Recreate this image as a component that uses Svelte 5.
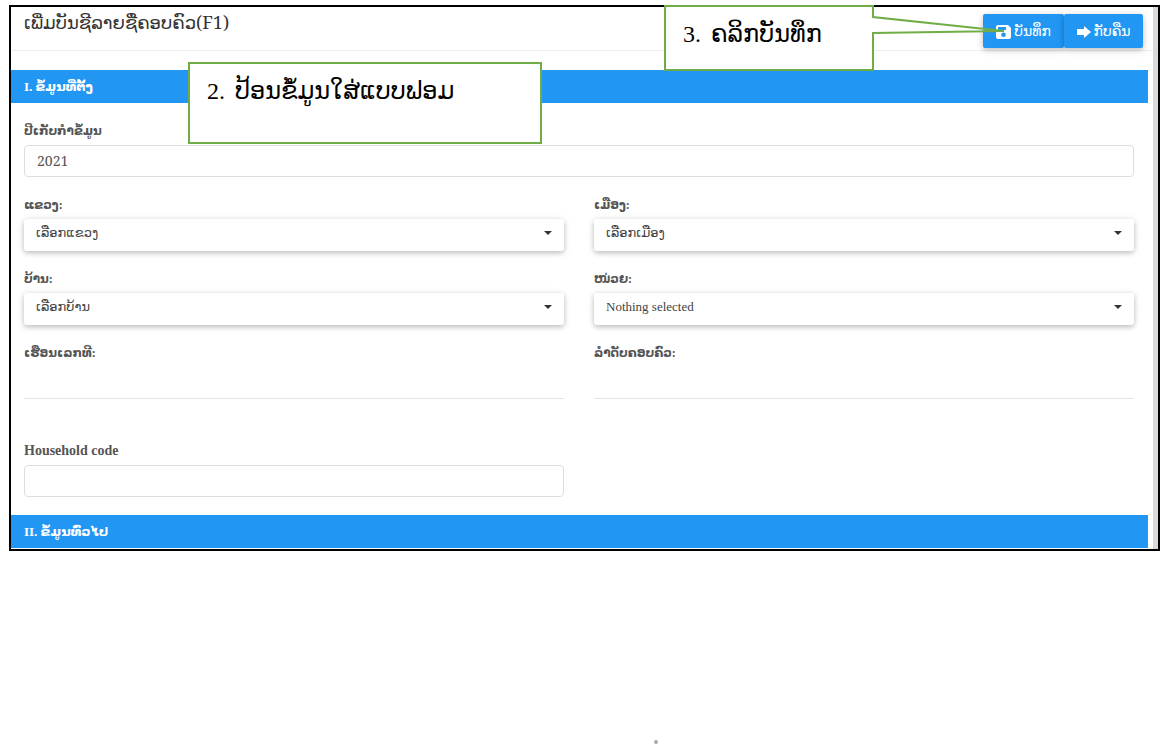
<script>
  let year = '2021';
  let houseNo = '';
  let familyNo = '';
  let householdCode = '';

  const selects = [
    { id: 'province', label: 'ແຂວງ:', placeholder: 'ເລືອກແຂວງ' },
    { id: 'district', label: 'ເມືອງ:', placeholder: 'ເລືອກເມືອງ' },
    { id: 'village', label: 'ບ້ານ:', placeholder: 'ເລືອກບ້ານ' },
    { id: 'unit', label: 'ໜ່ວຍ:', placeholder: 'Nothing selected' }
  ];
</script>

<div class="frame">
  <div class="page">
    <header>
      <h1>ເພີ່ມບັນຊີລາຍຊື່ຄອບຄົວ(F1)</h1>
      <div class="actions">
        <button type="button" class="store">
          <svg width="16" height="16" viewBox="0 0 16 16">
            <path fill="#fff" fill-rule="evenodd" d="M2 1h10l3 3v9a2 2 0 0 1-2 2H2a2 2 0 0 1-2-2V3a2 2 0 0 1 2-2zM2 3v3h8V3zM7.5 8.500a2.300 2.300 0 1 0 0 4.600a2.300 2.300 0 1 0 0-4.600z" />
          </svg>
          <span>ບັນທຶກ</span>
        </button>
        <button type="button" class="back">
          <svg width="14" height="14" viewBox="0 0 14 14">
            <path fill="#fff" d="M0 4h7V1l7 6l-7 6v-3H0z" />
          </svg>
          <span>ກັບຄືນ</span>
        </button>
      </div>
    </header>

    <form>
      <h2>I. ຂໍ້ມູນທີ່ຕັ້ງ</h2>
      <div class="fields">
        <div class="field wide">
          <label for="year">ປີເກັບກຳຂໍ້ມູນ</label>
          <input id="year" class="box" type="text" bind:value={year} />
        </div>
        {#each selects as item}
          <div class="field">
            <label for={item.id}>{item.label}</label>
            <div class="picker">
              <select id={item.id}>
                <option>{item.placeholder}</option>
              </select>
              <svg class="caret" width="8" height="4" viewBox="0 0 8 4">
                <path fill="#333" d="M0 0h8L4 4z" />
              </svg>
            </div>
          </div>
        {/each}
        <div class="field">
          <label for="house">ເຮືອນເລກທີ:</label>
          <input id="house" class="line" type="text" bind:value={houseNo} />
        </div>
        <div class="field">
          <label for="family">ລຳດັບຄອບຄົວ:</label>
          <input id="family" class="line" type="text" bind:value={familyNo} />
        </div>
        <div class="field code">
          <label for="code">Household code</label>
          <input id="code" class="box" type="text" bind:value={householdCode} />
        </div>
      </div>
      <h2>II. ຂໍ້ມູນທົ່ວໄປ</h2>
    </form>
  </div>

  <div class="callout fill"><span>2.</span> <span>ປ້ອນຂໍ້ມູນໃສ່ແບບຟອມ</span></div>
  <div class="callout save">
    <span>3.</span> <span>ຄລິກບັນທຶກ</span>
    <svg class="tail" width="134" height="20" viewBox="0 0 134 20">
      <path fill="#fff" d="M0 2L118 15L0 18z" />
      <path fill="none" stroke="#70ad47" stroke-width="2" d="M1 0V2L132 16L1 18V20" />
    </svg>
  </div>
</div>
<div class="dot"></div>

<style>
  :global(body) {
    background: #fff;
  }

  .frame {
    position: relative;
    margin: 5px 1px 0 9px;
    border: 2px solid #000;
    font-family: 'Liberation Serif', 'DejaVu Sans', serif;
    color: #555;
  }

  .page {
    border-right: 5px solid #d9d9d9;
    padding-bottom: 1px;
  }

  header {
    display: flex;
    justify-content: space-between;
    align-items: flex-start;
    height: 43px;
    padding: 0 10px 0 13px;
    border-bottom: 1px solid #eee;
  }

  h1 {
    margin: 3px 0 0;
    font-family: 'Noto Serif', 'DejaVu Serif', 'DejaVu Sans', serif;
    font-size: 18px;
    font-weight: 400;
    line-height: 24px;
    color: #333;
  }

  .actions {
    display: flex;
    margin-top: 7px;
  }

  button {
    display: flex;
    align-items: center;
    justify-content: center;
    height: 34px;
    padding: 2px 0 0;
    border: 0;
    border-radius: 2px;
    background: #2196f3;
    box-shadow: 0 2px 5px rgba(0, 0, 0, 0.16), 0 2px 10px rgba(0, 0, 0, 0.12);
    color: #fff;
    font-family: inherit;
    font-size: 14px;
    line-height: 20px;
  }

  .store {
    gap: 2px;
    width: 81px;
  }

  .back {
    gap: 3px;
    width: 79px;
  }

  form {
    padding: 19px 5px 0 0;
  }

  h2 {
    margin: 0;
    padding: 0 13px;
    background: #2196f3;
    color: #fff;
    font-size: 13px;
    font-weight: 700;
    line-height: 33px;
  }

  .fields {
    display: grid;
    grid-template-columns: 1fr 1fr;
    gap: 18px 30px;
    padding: 18px 14px 18px 13px;
  }

  .field {
    display: flex;
    flex-direction: column;
    gap: 4px;
  }

  .wide {
    grid-column: 1 / -1;
  }

  .code {
    padding-top: 24px;
  }

  label {
    font-size: 12px;
    font-weight: 700;
    line-height: 20px;
  }

  .code label {
    font-size: 14px;
  }

  input,
  select {
    box-sizing: border-box;
    width: 100%;
    height: 32px;
    padding: 0 12px;
    border: 0;
    background: #fff;
    color: #555;
    font-family: inherit;
    font-size: 13px;
  }

  .box {
    padding-bottom: 2px;
    border: 1px solid #ddd;
    border-radius: 4px;
    font-family: 'Noto Serif', 'DejaVu Serif', serif;
    font-size: 14px;
  }

  .line {
    border-bottom: 1px solid #e6e6e6;
  }

  .picker {
    position: relative;
  }

  select {
    display: block;
    appearance: none;
    padding-bottom: 6px;
    border-radius: 3px;
    box-shadow: 0 2px 5px rgba(0, 0, 0, 0.2), 0 1px 8px rgba(0, 0, 0, 0.1);
    color: #444;
  }

  .caret {
    position: absolute;
    top: 12px;
    right: 12px;
    pointer-events: none;
  }

  .callout {
    position: absolute;
    box-sizing: border-box;
    display: flex;
    align-items: flex-start;
    gap: 10px;
    border: 2px solid #70ad47;
    background: #fff;
    padding: 11px 17px;
    color: #000;
    font-size: 24px;
    line-height: 32px;
  }

  .fill {
    top: 55px;
    left: 177px;
    width: 354px;
    height: 82px;
  }

  .save {
    top: -2px;
    right: 284px;
    width: 210px;
    height: 66px;
  }

  .tail {
    position: absolute;
    top: 8px;
    left: 206px;
  }

  .dot {
    width: 4px;
    height: 4px;
    margin: 189px auto 0 56.3%;
    border-radius: 50%;
    background: #aaa;
  }
</style>
